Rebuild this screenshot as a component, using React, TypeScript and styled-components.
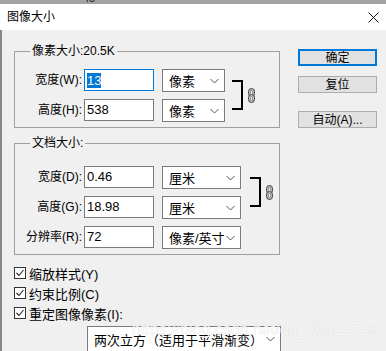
import React from "react";
import styled, { createGlobalStyle } from "styled-components";

const Global = createGlobalStyle`
  html, body { margin: 0; padding: 0; background: #f0f0f0; }
  body {
    font-family: "Liberation Sans", "Noto Sans CJK SC", sans-serif;
    font-size: 12px;
    color: #000;
  }
`;

const Window = styled.div`
  position: relative;
  width: 386px;
  height: 351px;
  overflow: hidden;
  display: flex;
  flex-direction: column;
  background: #f0f0f0;
`;

const Ruler = styled.div`
  height: 4px;
  flex: none;
  background: #a3a3a3;
  overflow: hidden;
  padding-left: 83px;
  font-size: 11px;
  line-height: 11px;
  color: #222;
  span { display: block; margin-top: -7px; }
`;

const TitleBar = styled.div`
  height: 26px;
  flex: none;
  background: #fff;
  display: flex;
  align-items: center;
  justify-content: space-between;
  padding: 0 7px;
  font-size: 12px;
  line-height: 14px;
`;

const Body = styled.div`
  flex: 1;
  display: flex;
  border-left: 2px solid #888;
  padding-left: 12px;
`;

const LeftCol = styled.div`
  width: 266px;
  display: flex;
  flex-direction: column;
`;

const RightCol = styled.div`
  width: 79px;
  margin-left: 18px;
  padding-top: 19px;
  display: flex;
  flex-direction: column;
`;

const Group = styled.fieldset<{ $top: number; $pad: number }>`
  margin: ${(p) => p.$top}px 0 0 0;
  padding: ${(p) => p.$pad}px 0 6px 0;
  border: 1px solid #a0a0a0;
  min-width: 0;
`;

const Legend = styled.legend`
  margin-left: 15px;
  padding: 0 2px;
  font-size: 12px;
  line-height: 14px;
`;

const Grid = styled.div`
  display: grid;
  grid-template-columns: 67px auto auto auto;
  grid-auto-rows: 22px;
  row-gap: 8px;
  align-items: start;
  justify-content: start;
`;

const Label = styled.label`
  grid-column: 1;
  text-align: right;
  font-size: 12px;
  line-height: 22px;
  white-space: nowrap;
`;

const Input = styled.div<{ $focus?: boolean }>`
  grid-column: 2;
  margin-left: 2px;
  width: 70px;
  height: 22px;
  box-sizing: border-box;
  background: #fff;
  border: 1px solid ${(p) => (p.$focus ? "#0078d7" : "#7a7a7a")};
  padding-left: 2px;
  font-size: 13px;
  line-height: 20px;
  display: flex;
  align-items: center;
`;

const Selected = styled.span`
  background: #0078d7;
  color: #fff;
  line-height: 15px;
`;

const SelectBox = styled.div<{ $w: number; $h?: number }>`
  width: ${(p) => p.$w}px;
  height: ${(p) => p.$h ?? 23}px;
  box-sizing: border-box;
  background: #fff;
  border: 1px solid #7a7a7a;
  padding: 0 5px 0 6px;
  display: flex;
  align-items: center;
  justify-content: space-between;
  font-size: 13px;
  white-space: nowrap;
  text-spacing-trim: space-all;
`;

const GridSelect = styled.div`
  grid-column: 3;
  margin-left: 8px;
`;

const LinkCell = styled.div<{ $gap: number }>`
  grid-column: 4;
  grid-row: 1 / span 2;
  margin-left: ${(p) => p.$gap}px;
  padding-top: 11px;
  display: flex;
  align-items: center;
`;

const Bracket = styled.div`
  width: 11px;
  height: 30px;
  box-sizing: border-box;
  border: 2px solid #000;
  border-left: none;
`;

const LinkIcon = styled.svg`
  margin-left: 5px;
`;

const CheckRow = styled.div`
  height: 20px;
  display: flex;
  align-items: center;
  font-size: 13px;
`;

const CheckList = styled.div`
  margin-top: 8px;
  display: flex;
  flex-direction: column;
`;

const Box = styled.span`
  width: 12px;
  height: 12px;
  box-sizing: border-box;
  border: 1px solid #333;
  background: #fff;
  margin-right: 3px;
  display: flex;
  align-items: center;
  justify-content: center;
`;

const BottomSelect = styled.div`
  margin: 3px 0 0 73px;
  font-family: "Noto Sans CJK SC", sans-serif;
`;

const Button = styled.div<{ $default?: boolean; $top: number }>`
  margin-top: ${(p) => p.$top}px;
  height: 17px;
  box-sizing: border-box;
  background: #e1e1e1;
  border: ${(p) => (p.$default ? "2px solid #0078d7" : "1px solid #adadad")};
  display: flex;
  align-items: center;
  justify-content: center;
  font-size: 12px;
  line-height: 14px;
`;

const Watermark = styled.div`
  position: absolute;
  left: 132px;
  top: 321px;
  font-family: "Liberation Sans", sans-serif;
  font-size: 16px;
  line-height: 18px;
  color: rgba(255, 255, 255, 0.9);
  text-shadow: 0 0 1px rgba(0, 0, 0, 0.18);
  pointer-events: none;
`;

const Chevron = () => (
  <svg width="9" height="6" viewBox="0 0 9 6">
    <path d="M0.5 1 L4.5 5 L8.5 1" fill="none" stroke="#555" strokeWidth="1" />
  </svg>
);

const Select = ({ w, h, text }: { w: number; h?: number; text: string }) => (
  <SelectBox $w={w} $h={h}>
    <span>{text}</span>
    <Chevron />
  </SelectBox>
);

const Chain = () => (
  <LinkIcon width="7" height="15" viewBox="0 0 7 15">
    <rect x="0.5" y="0.5" width="6" height="8" rx="3" fill="#bbb" stroke="#444" />
    <rect x="0.5" y="6.5" width="6" height="8" rx="3" fill="#bbb" stroke="#444" />
    <rect x="2.5" y="2.5" width="2" height="4" rx="1" fill="#eee" stroke="#666" strokeWidth="0.6" />
    <rect x="2.5" y="8.5" width="2" height="4" rx="1" fill="#eee" stroke="#666" strokeWidth="0.6" />
  </LinkIcon>
);

const Check = ({ label }: { label: string }) => (
  <CheckRow>
    <Box>
      <svg width="10" height="10" viewBox="0 0 10 10">
        <path d="M1.5 5 L4 7.5 L8.5 2" fill="none" stroke="#222" strokeWidth="1.1" />
      </svg>
    </Box>
    {label}
  </CheckRow>
);

export default function App() {
  return (
    <Window>
      <Global />
      <Ruler><span>48</span></Ruler>
      <TitleBar>
        <span>图像大小</span>
        <svg width="11" height="11" viewBox="0 0 11 11">
          <path d="M0.5 0.5 L10.5 10.5 M10.5 0.5 L0.5 10.5" stroke="#111" strokeWidth="1" />
        </svg>
      </TitleBar>
      <Body>
        <LeftCol>
          <Group $top={14} $pad={11}>
            <Legend>像素大小:20.5K</Legend>
            <Grid>
              <Label>宽度(W):</Label>
              <Input $focus><Selected>13</Selected></Input>
              <GridSelect><Select w={63} text="像素" /></GridSelect>
              <LinkCell $gap={7}><Bracket /><Chain /></LinkCell>
              <Label>高度(H):</Label>
              <Input>538</Input>
              <GridSelect><Select w={63} text="像素" /></GridSelect>
            </Grid>
          </Group>
          <Group $top={8} $pad={16}>
            <Legend>文档大小:</Legend>
            <Grid>
              <Label>宽度(D):</Label>
              <Input>0.46</Input>
              <GridSelect><Select w={79} text="厘米" /></GridSelect>
              <LinkCell $gap={9}><Bracket /><Chain /></LinkCell>
              <Label>高度(G):</Label>
              <Input>18.98</Input>
              <GridSelect><Select w={79} text="厘米" /></GridSelect>
              <Label>分辨率(R):</Label>
              <Input>72</Input>
              <GridSelect><Select w={79} text="像素/英寸" /></GridSelect>
            </Grid>
          </Group>
          <CheckList>
            <Check label="缩放样式(Y)" />
            <Check label="约束比例(C)" />
            <Check label="重定图像像素(I):" />
          </CheckList>
          <BottomSelect>
            <Select w={194} h={26} text="两次立方（适用于平滑渐变）" />
          </BottomSelect>
        </LeftCol>
        <RightCol>
          <Button $default $top={0}>确定</Button>
          <Button $top={10}>复位</Button>
          <Button $top={18}>自动(A)...</Button>
        </RightCol>
      </Body>
      <Watermark>https://blog.csdn.net/qq_36412715</Watermark>
    </Window>
  );
}
